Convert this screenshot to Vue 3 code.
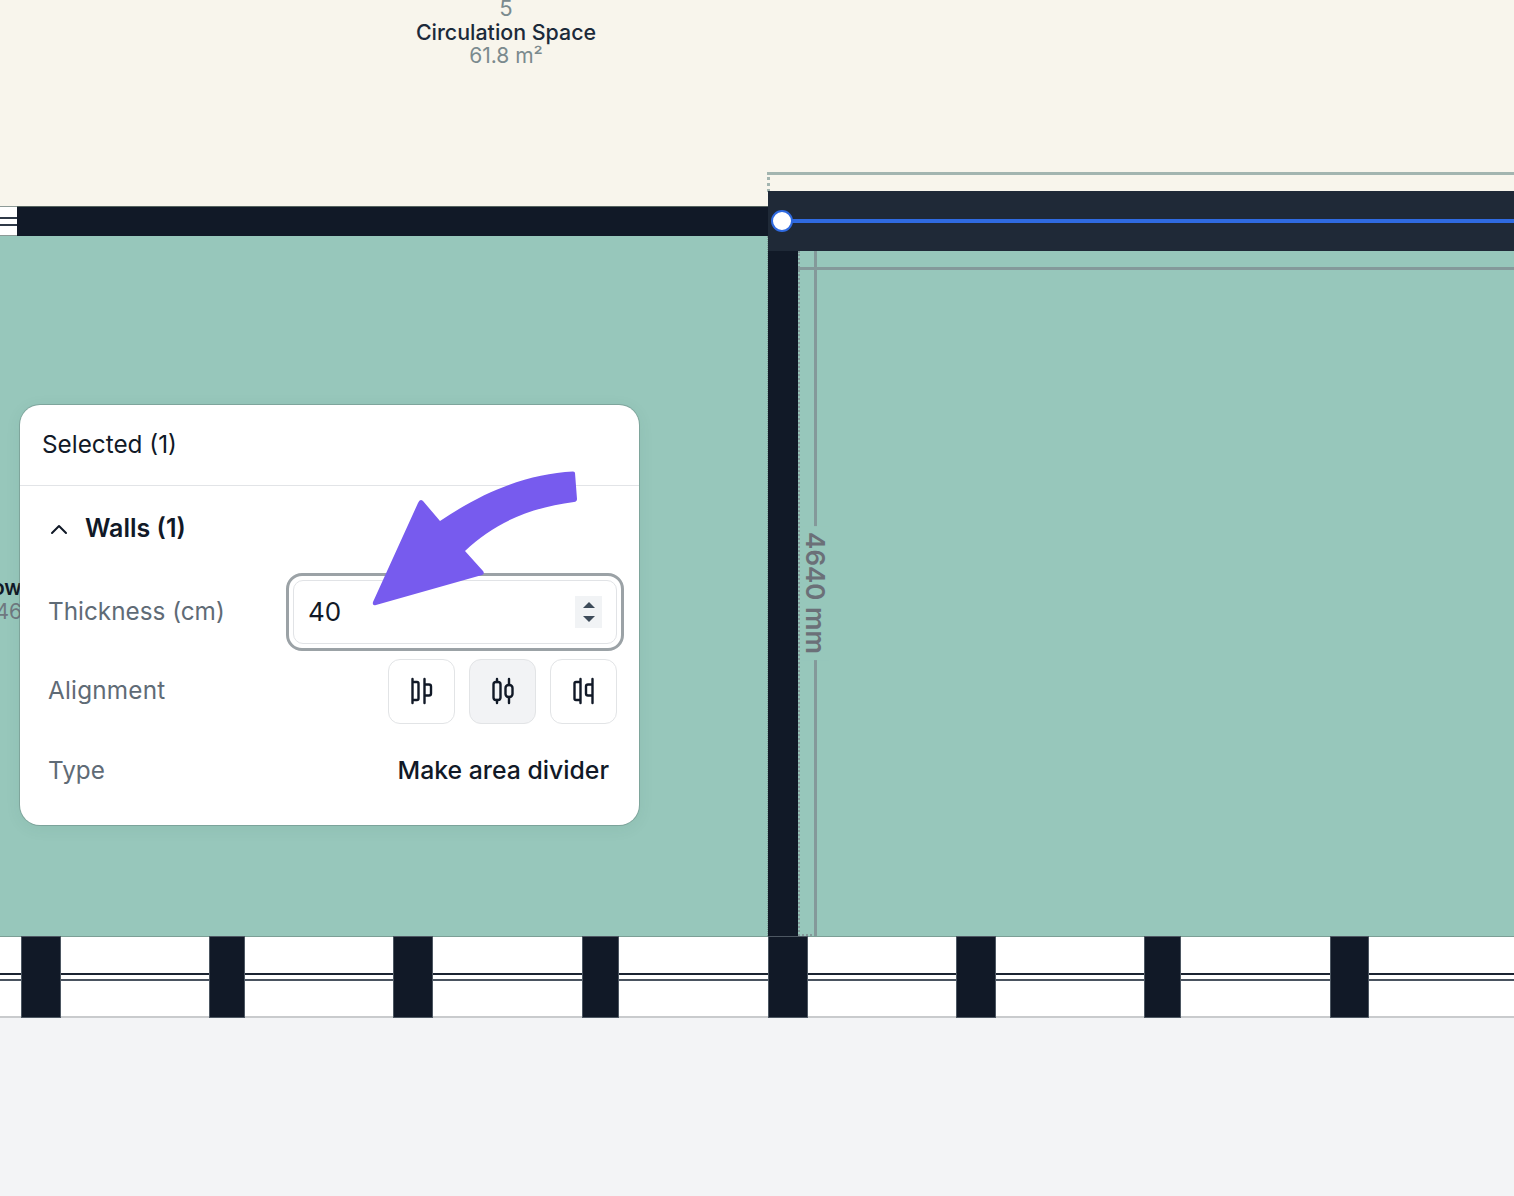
<script setup>
// columns of the window band, left edge and width
const columns = [
  { x: 21, w: 40 },
  { x: 209, w: 36 },
  { x: 393, w: 40 },
  { x: 582, w: 37 },
  { x: 768, w: 40 },
  { x: 956, w: 40 },
  { x: 1144, w: 37 },
  { x: 1330, w: 39 },
]
</script>

<template>
  <div class="plan">
    <!-- areas -->
    <div class="area-circulation"></div>
    <div class="area-teal"></div>
    <div class="band">
      <div class="band-line l1"></div>
      <div class="band-line l2"></div>
    </div>
    <div class="ground"></div>

    <div
      v-for="c in columns"
      :key="c.x"
      class="column"
      :style="{ left: c.x + 'px', width: c.w + 'px' }"
    ></div>

    <!-- walls -->
    <div class="door">
      <span></span>
      <span></span>
    </div>
    <div class="wall-top"></div>
    <div class="wall-vert"></div>

    <!-- selection guides -->
    <div class="guide-top"></div>
    <div class="guide-left"></div>
    <div class="guide-wall"></div>
    <div class="guide-inner-box"></div>
    <div class="guide-inner-h"></div>
    <div class="guide-inner-v"></div>
    <div class="wall-selected"></div>
    <div class="blue-line"></div>
    <div class="handle"></div>

    <div class="dim-label">4640 mm</div>

    <div class="room-label">
      <div class="room-num">5</div>
      <div class="room-name">Circulation Space</div>
      <div class="room-size">61.8 m²</div>
    </div>

    <div class="cut-label cut-a">ow</div>
    <div class="cut-label cut-b">46</div>

    <!-- panel -->
    <div class="panel">
      <div class="panel-head">Selected (1)</div>
      <div class="panel-body">
        <div class="section-title">
          <svg width="20" height="20" viewBox="0 0 20 20" fill="none">
            <path d="M3 14l7-7 7 7" stroke="#111927" stroke-width="2" stroke-linecap="round" stroke-linejoin="round" />
          </svg>
          <span>Walls (1)</span>
        </div>

        <div class="row row-thick">
          <span class="row-label">Thickness (cm)</span>
          <div class="input-ring">
            <div class="input">
              <span>40</span>
              <div class="spinner">
                <svg width="14" height="24" viewBox="0 0 14 24">
                  <path d="M7 2l6 6H1z" fill="#3d4b59" />
                  <path d="M7 22l6-6H1z" fill="#3d4b59" />
                </svg>
              </div>
            </div>
          </div>
        </div>

        <div class="row row-align">
          <span class="row-label">Alignment</span>
          <div class="align-btns">
            <button class="align-btn">
              <svg width="26" height="28" viewBox="0 0 26 28" fill="none" stroke="#111927" stroke-width="2.4" stroke-linecap="round">
                <path d="M3.500 2v24M3.500 5h4.500a1.500 1.500 0 0 1 1.500 1.500v15a1.500 1.500 0 0 1-1.500 1.500H3.500" />
                <path d="M15.500 2v24M15.500 7.500h4.500a2 2 0 0 1 2 2v7a2 2 0 0 1-2 2h-4.500" />
              </svg>
            </button>
            <button class="align-btn active">
              <svg width="26" height="28" viewBox="0 0 26 28" fill="none" stroke="#111927" stroke-width="2.4" stroke-linecap="round">
                <path d="M7 2v3M7 23v3M19 2v6M19 20v6" />
                <rect x="3.500" y="5" width="7" height="18" rx="2.500" />
                <rect x="15.500" y="8" width="7" height="12" rx="3" />
              </svg>
            </button>
            <button class="align-btn">
              <svg width="26" height="28" viewBox="0 0 26 28" fill="none" stroke="#111927" stroke-width="2.4" stroke-linecap="round">
                <path d="M9.500 2v24M9.500 5H5a1.500 1.500 0 0 0-1.500 1.500v15A1.500 1.500 0 0 0 5 23h4.500" />
                <path d="M21.500 2v24M21.500 7.500H17a2 2 0 0 0-2 2v7a2 2 0 0 0 2 2h4.500" />
              </svg>
            </button>
          </div>
        </div>

        <div class="row row-type">
          <span class="row-label">Type</span>
          <span class="type-action">Make area divider</span>
        </div>
      </div>
    </div>

    <!-- annotation arrow -->
    <svg class="arrow" width="220" height="150" viewBox="0 0 220 150">
      <path
        d="M202 1.500 C160 4 118 18 69 51 L52 31 Q49 28 47 33 L2 132 Q1 136 5 135 L111 105 Q114 104 112 101 L94 81 C125 51 163 37 203 32 Q206 31.500 206 29 L204 3 Q204 1.500 202 1.500 Z"
        fill="#775bee"
      />
    </svg>
  </div>
</template>

<style scoped>
.plan {
  position: relative;
  width: 1514px;
  height: 1196px;
  overflow: hidden;
  background: #f3f4f6;
  font-family: Inter, "Liberation Sans", sans-serif;
  color: #111927;
}

.area-circulation {
  position: absolute;
  left: 0;
  top: 0;
  width: 100%;
  height: 206px;
  background: #f8f5ec;
}

.area-teal {
  position: absolute;
  left: 0;
  top: 236px;
  width: 100%;
  height: 700px;
  background: #97c7bb;
}

.band {
  position: absolute;
  left: 0;
  top: 936px;
  width: 100%;
  height: 82px;
  background: #fff;
  border-top: 1px solid #7c9f96;
  border-bottom: 2px solid #c9cbcd;
  box-sizing: border-box;
}

.band-line {
  position: absolute;
  left: 0;
  width: 100%;
  height: 2px;
}

.l1 {
  top: 36px;
  background: #1b2431;
}

.l2 {
  top: 42px;
  height: 2px;
  background: #4a5460;
}

.ground {
  position: absolute;
  left: 0;
  top: 1018px;
  width: 100%;
  height: 178px;
  background: #f3f4f6;
}

.column {
  position: absolute;
  top: 936px;
  height: 82px;
  background: #111927;
  box-shadow: inset 0 0 0 1px #4d5762;
}

.door {
  position: absolute;
  left: 0;
  top: 206px;
  width: 17px;
  height: 30px;
  background: #fff;
  border-top: 1px solid #8d9a97;
  border-bottom: 1px solid #8d9a97;
  box-sizing: border-box;
}

.door span {
  position: absolute;
  left: 0;
  width: 100%;
  height: 2px;
  background: #2f3947;
}

.door span:first-child {
  top: 10px;
}

.door span:last-child {
  top: 17px;
}

.wall-top {
  position: absolute;
  left: 17px;
  top: 206px;
  width: 751px;
  height: 30px;
  background: #111927;
  border-top: 1px solid #56635f;
  box-sizing: border-box;
}

.wall-vert {
  position: absolute;
  left: 768px;
  top: 236px;
  width: 30px;
  height: 700px;
  background: #111927;
}

.guide-top {
  position: absolute;
  left: 768px;
  top: 172px;
  width: 746px;
  height: 3px;
  background: #a3b5b0;
}

.guide-left {
  position: absolute;
  left: 767px;
  top: 172px;
  height: 20px;
  border-left: 3px dotted #a3b5b0;
}

.guide-wall {
  position: absolute;
  left: 767px;
  top: 236px;
  height: 700px;
  border-left: 1px dotted #7f9d95;
}

.guide-inner-h {
  position: absolute;
  left: 798px;
  top: 267px;
  width: 716px;
  height: 3px;
  background: #84999a;
}

.guide-inner-v {
  position: absolute;
  left: 814px;
  top: 251px;
  width: 3px;
  height: 685px;
  background: #84999a;
}

.guide-inner-box {
  position: absolute;
  left: 798px;
  top: 251px;
  width: 18px;
  height: 685px;
  border-left: 2px dotted #84999a;
  border-bottom: 2px dotted #84999a;
  box-sizing: border-box;
}

.wall-selected {
  position: absolute;
  left: 768px;
  top: 191px;
  width: 746px;
  height: 60px;
  background: #1f2937;
}

.blue-line {
  position: absolute;
  left: 782px;
  top: 219px;
  width: 732px;
  height: 4px;
  background: #2f6ae0;
}

.handle {
  position: absolute;
  left: 771px;
  top: 210px;
  width: 22px;
  height: 22px;
  box-sizing: border-box;
  border-radius: 50%;
  background: #fff;
  border: 2px solid #2f6ae0;
}

.dim-label {
  position: absolute;
  left: 815px;
  top: 593px;
  transform: translate(-50%, -50%) rotate(90deg);
  padding: 0 6px;
  background: #97c7bb;
  color: #6b7078;
  font-size: 26px;
  font-weight: 600;
  line-height: 28px;
  white-space: nowrap;
}

.room-label {
  position: absolute;
  left: 406px;
  top: -4px;
  width: 200px;
  text-align: center;
  line-height: 24px;
}

.room-num {
  font-size: 22px;
  color: #7b8a8e;
}

.room-name {
  font-size: 21.4px;
  font-weight: 500;
  line-height: 24px;
  color: #1c2a3a;
}

.room-size {
  font-size: 21px;
  line-height: 23px;
  color: #7b8a8e;
}

.cut-label {
  position: absolute;
  left: 0;
  width: 22px;
  overflow: hidden;
  font-size: 21px;
  line-height: 24px;
  white-space: nowrap;
  direction: rtl;
}

.cut-a {
  top: 576px;
  font-weight: 600;
}

.cut-b {
  top: 600px;
  color: #6f7880;
}

.panel {
  position: absolute;
  left: 20px;
  top: 405px;
  width: 619px;
  height: 420px;
  box-sizing: border-box;
  background: #fff;
  border-radius: 20px;
  box-shadow: 0 0 0 1px rgba(90, 110, 105, 0.35), 0 3px 16px rgba(40, 90, 80, 0.08);
}

.panel-head {
  height: 81px;
  box-sizing: border-box;
  padding: 0 0 2px 22px;
  display: flex;
  align-items: center;
  font-size: 24.300px;
  border-bottom: 1px solid #e2e4e7;
}

.panel-body {
  padding: 0 22px 0 29px;
}

.section-title {
  height: 85px;
  display: flex;
  align-items: center;
  gap: 16px;
  font-size: 25px;
  font-weight: 600;
}

.section-title span {
  padding-bottom: 2px;
}

.row {
  display: flex;
  align-items: center;
  justify-content: space-between;
  font-size: 24.300px;
}

.row-label {
  margin-left: -1px;
  padding-bottom: 2px;
  color: #5f6b76;
}

.row-align .row-label {
  letter-spacing: 0.2px;
}

.row-thick {
  height: 81px;
  margin-right: -7px;
}

.input-ring {
  width: 338px;
  height: 78px;
  box-sizing: border-box;
  border: 3px solid #9ba2a6;
  border-radius: 16px;
  padding: 4px;
}

.input {
  height: 100%;
  box-sizing: border-box;
  border: 1px solid #e1e3e6;
  border-radius: 10px;
  display: flex;
  align-items: center;
  justify-content: space-between;
  padding: 0 14px 0 14px;
  font-size: 26px;
}

.spinner {
  width: 27px;
  height: 32px;
  background: #f1f3f5;
  display: flex;
  align-items: center;
  justify-content: center;
}

.row-align {
  height: 78px;
}

.align-btns {
  display: flex;
  gap: 14px;
}

.align-btn {
  width: 67px;
  height: 65px;
  padding: 0;
  display: flex;
  align-items: center;
  justify-content: center;
  background: #fff;
  border: 1px solid #e2e4e6;
  border-radius: 12px;
}

.align-btn.active {
  background: #f2f3f5;
}

.row-type {
  height: 82px;
}

.type-action {
  font-size: 24.800px;
  font-weight: 500;
  padding: 0 8px 2px 0;
}

.arrow {
  position: absolute;
  left: 371px;
  top: 470px;
}
</style>
